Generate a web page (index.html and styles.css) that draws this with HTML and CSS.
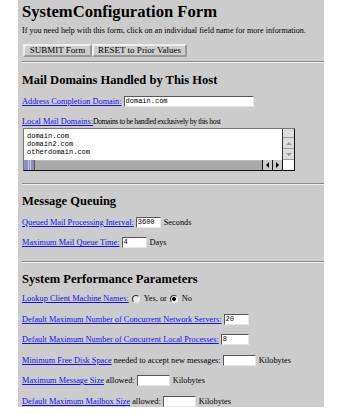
FILE: index.html
```html
<!DOCTYPE html>
<html lang="en">

<head>
  <meta charset="UTF-8" />
  <title>System Configuration Form</title>
  <link rel="stylesheet" href="styles.css">
</head>

<body>

  <div class="page">
    <h1>SystemConfiguration Form</h1>
    <p class="intro">If you need help with this form, click on an individual field name for more information.</p>

    <div class="buttons">
      <button class="btn btn-submit">SUBMIT Form</button>
      <button class="btn btn-reset">RESET to Prior Values</button>
    </div>

    <hr>

    <h2>Mail Domains Handled by This Host</h2>
    <div class="row first">
      <a href="#">Address Completion Domain:</a><span class="field field-domain">domain.com</span>
    </div>
    <div class="row">
      <a href="#">Local Mail Domains:</a><span class="note">Domains to be handled exclusively by this host</span>
    </div>

    <div class="textarea">
      <div class="ta-main">
        <div class="ta-text">domain.com<br>domain2.com<br>otherdomain.com</div>
        <div class="vscroll">
          <span class="vs-track"></span>
          <span class="vs-btn"><i class="arrow-up"></i></span>
          <span class="vs-btn"><i class="arrow-down"></i></span>
        </div>
      </div>
      <div class="hscroll">
        <span class="hs-thumb"></span>
        <span class="hs-track"></span>
        <span class="hs-btn"><i class="arrow-left"></i></span>
        <span class="hs-btn"><i class="arrow-right"></i></span>
        <span class="hs-corner"></span>
      </div>
    </div>

    <hr class="after-box">

    <h2>Message Queuing</h2>
    <div class="row first">
      <a href="#">Queued Mail Processing Interval:</a><span class="field w25">3600</span>Seconds
    </div>
    <div class="row">
      <a href="#">Maximum Mail Queue Time:</a><span class="field w25">4</span>Days
    </div>

    <hr class="after-row">

    <h2>System Performance Parameters</h2>
    <div class="row first tight">
      <a href="#">Lookup Client Machine Names:</a><span class="radio"></span>Yes, or<span class="radio checked"></span>No
    </div>
    <div class="row">
      <a href="#">Default Maximum Number of Concurrent Network Servers:</a><span class="field w25">20</span>
    </div>
    <div class="row">
      <a href="#">Default Maximum Number of Concurrent Local Processes:</a><span class="field w27">8</span>
    </div>
    <div class="row">
      <a href="#">Minimum Free Disk Space</a> needed to accept new messages:<span class="field w33"></span>Kilobytes
    </div>
    <div class="row">
      <a href="#">Maximum Message Size</a> allowed:<span class="field w33"></span>Kilobytes
    </div>
    <div class="row">
      <a href="#">Default Maximum Mailbox Size</a> allowed:<span class="field w33"></span>Kilobytes
    </div>
  </div>

</body>

</html>
```

FILE: styles.css
```css
body {
  margin: 0;
  background: #ffffff;
  font-family: 'Liberation Serif', serif;
  color: #000;
}

.page {
  margin-left: 18px;
  width: 302px;
  height: 407px;
  padding-left: 4px;
  background: #cccccc;
  overflow: hidden;
  font-size: 8.3px;
}

h1 {
  margin: 0;
  padding-top: 2px;
  font-size: 16.6px;
  line-height: 20px;
}

h2 {
  margin: 0;
  font-size: 12.5px;
  line-height: 16px;
}

.intro {
  margin: 3px 0 0;
  font-size: 8.1px;
  line-height: 12px;
}

.buttons {
  margin-top: 7px;
  display: flex;
  padding-left: 1px;
}

.btn {
  box-sizing: border-box;
  height: 13px;
  padding: 0;
  margin: 0;
  font-family: 'Liberation Serif', serif;
  font-size: 9px;
  line-height: 9px;
  white-space: nowrap;
  background: #cccccc;
  border: 2px outset #eeeeee;
  color: #000;
}

.btn-submit {
  width: 69px;
}

.btn-reset {
  width: 95px;
}

hr {
  margin: 4px 0 9px;
  border: none;
  border-top: 1px solid #8a8a8a;
  border-bottom: 1px solid #eeeeee;
}

hr.after-box,
hr.after-row {
  margin-top: 12px;
  margin-bottom: 8px;
}

a {
  color: #1010f0;
}

.row {
  white-space: nowrap;
  height: 12px;
  line-height: 12px;
  margin-top: 8.5px;
}

.row.first {
  margin-top: 7.5px;
}

.row.tight {
  margin-top: 6px;
}

.note {
  font-size: 7.6px;
  letter-spacing: -0.35px;
}

.field {
  display: inline-block;
  vertical-align: middle;
  box-sizing: border-box;
  height: 11px;
  margin: -1px 3px 0 2px;
  padding-left: 1px;
  background: #fff;
  border-top: 1px solid #555;
  border-left: 1px solid #555;
  border-right: 1px solid #e6e6e6;
  border-bottom: 1px solid #e6e6e6;
  font-family: 'Liberation Mono', monospace;
  font-size: 7px;
  line-height: 9px;
}

.field-domain {
  width: 130px;
}

.w25 {
  width: 25px;
}

.w27 {
  width: 28px;
}

.w33 {
  width: 33px;
}

.radio {
  display: inline-block;
  vertical-align: middle;
  box-sizing: border-box;
  width: 8px;
  height: 8px;
  margin: -1px 4px 0 3px;
  border-radius: 50%;
  background: #e8e8e8;
  border: 1px solid #333;
  border-right-color: #eee;
  border-bottom-color: #eee;
}

.radio.checked {
  background: radial-gradient(circle, #000 1.6px, #e8e8e8 2.2px);
}

.textarea {
  margin: 0 0 0 1px;
  box-sizing: border-box;
  width: 272px;
  height: 43px;
  border-top: 1px solid #777;
  border-left: 1px solid #777;
  border-right: 1px solid #111;
  border-bottom: 1px solid #111;
  display: flex;
  flex-direction: column;
}

.ta-main {
  flex: 1;
  display: flex;
  background: #fff;
}

.ta-text {
  flex: 1;
  padding: 3px 0 0 3px;
  font-family: 'Liberation Mono', monospace;
  font-size: 7px;
  line-height: 8px;
}

.vscroll {
  width: 11px;
  background: #dddddd;
  border-left: 1px solid #333;
  display: flex;
  flex-direction: column;
}

.vs-track {
  flex: 1;
  border-bottom: 1px solid #999;
}

.vs-btn {
  height: 10px;
  display: flex;
  align-items: center;
  justify-content: center;
  border-bottom: 1px solid #999;
}

.arrow-up,
.arrow-down {
  width: 0;
  height: 0;
  border-left: 3px solid transparent;
  border-right: 3px solid transparent;
}

.arrow-up {
  border-bottom: 3px solid #999;
}

.arrow-down {
  border-top: 3px solid #999;
}

.hscroll {
  height: 10px;
  display: flex;
  background: #a9a9a9;
}

.hs-thumb {
  width: 11px;
  background: #8e8ebc;
  border-right: 1px solid #555;
  box-sizing: border-box;
  background-image: linear-gradient(to right, transparent 4px, #c8c8e8 4px, #c8c8e8 5px, transparent 5px, transparent 6px, #c8c8e8 6px, #c8c8e8 7px, transparent 7px);
}

.hs-track {
  flex: 1;
  border-top: 1px solid #bbb;
}

.hs-btn {
  width: 9px;
  background: #cccccc;
  border-left: 1px solid #111;
  display: flex;
  align-items: center;
  justify-content: center;
}

.arrow-left,
.arrow-right {
  width: 0;
  height: 0;
  border-top: 3px solid transparent;
  border-bottom: 3px solid transparent;
}

.arrow-left {
  border-right: 3px solid #000;
}

.arrow-right {
  border-left: 3px solid #000;
}

.hs-corner {
  width: 11px;
  background: #fff;
  border-left: 1px solid #111;
}
```
